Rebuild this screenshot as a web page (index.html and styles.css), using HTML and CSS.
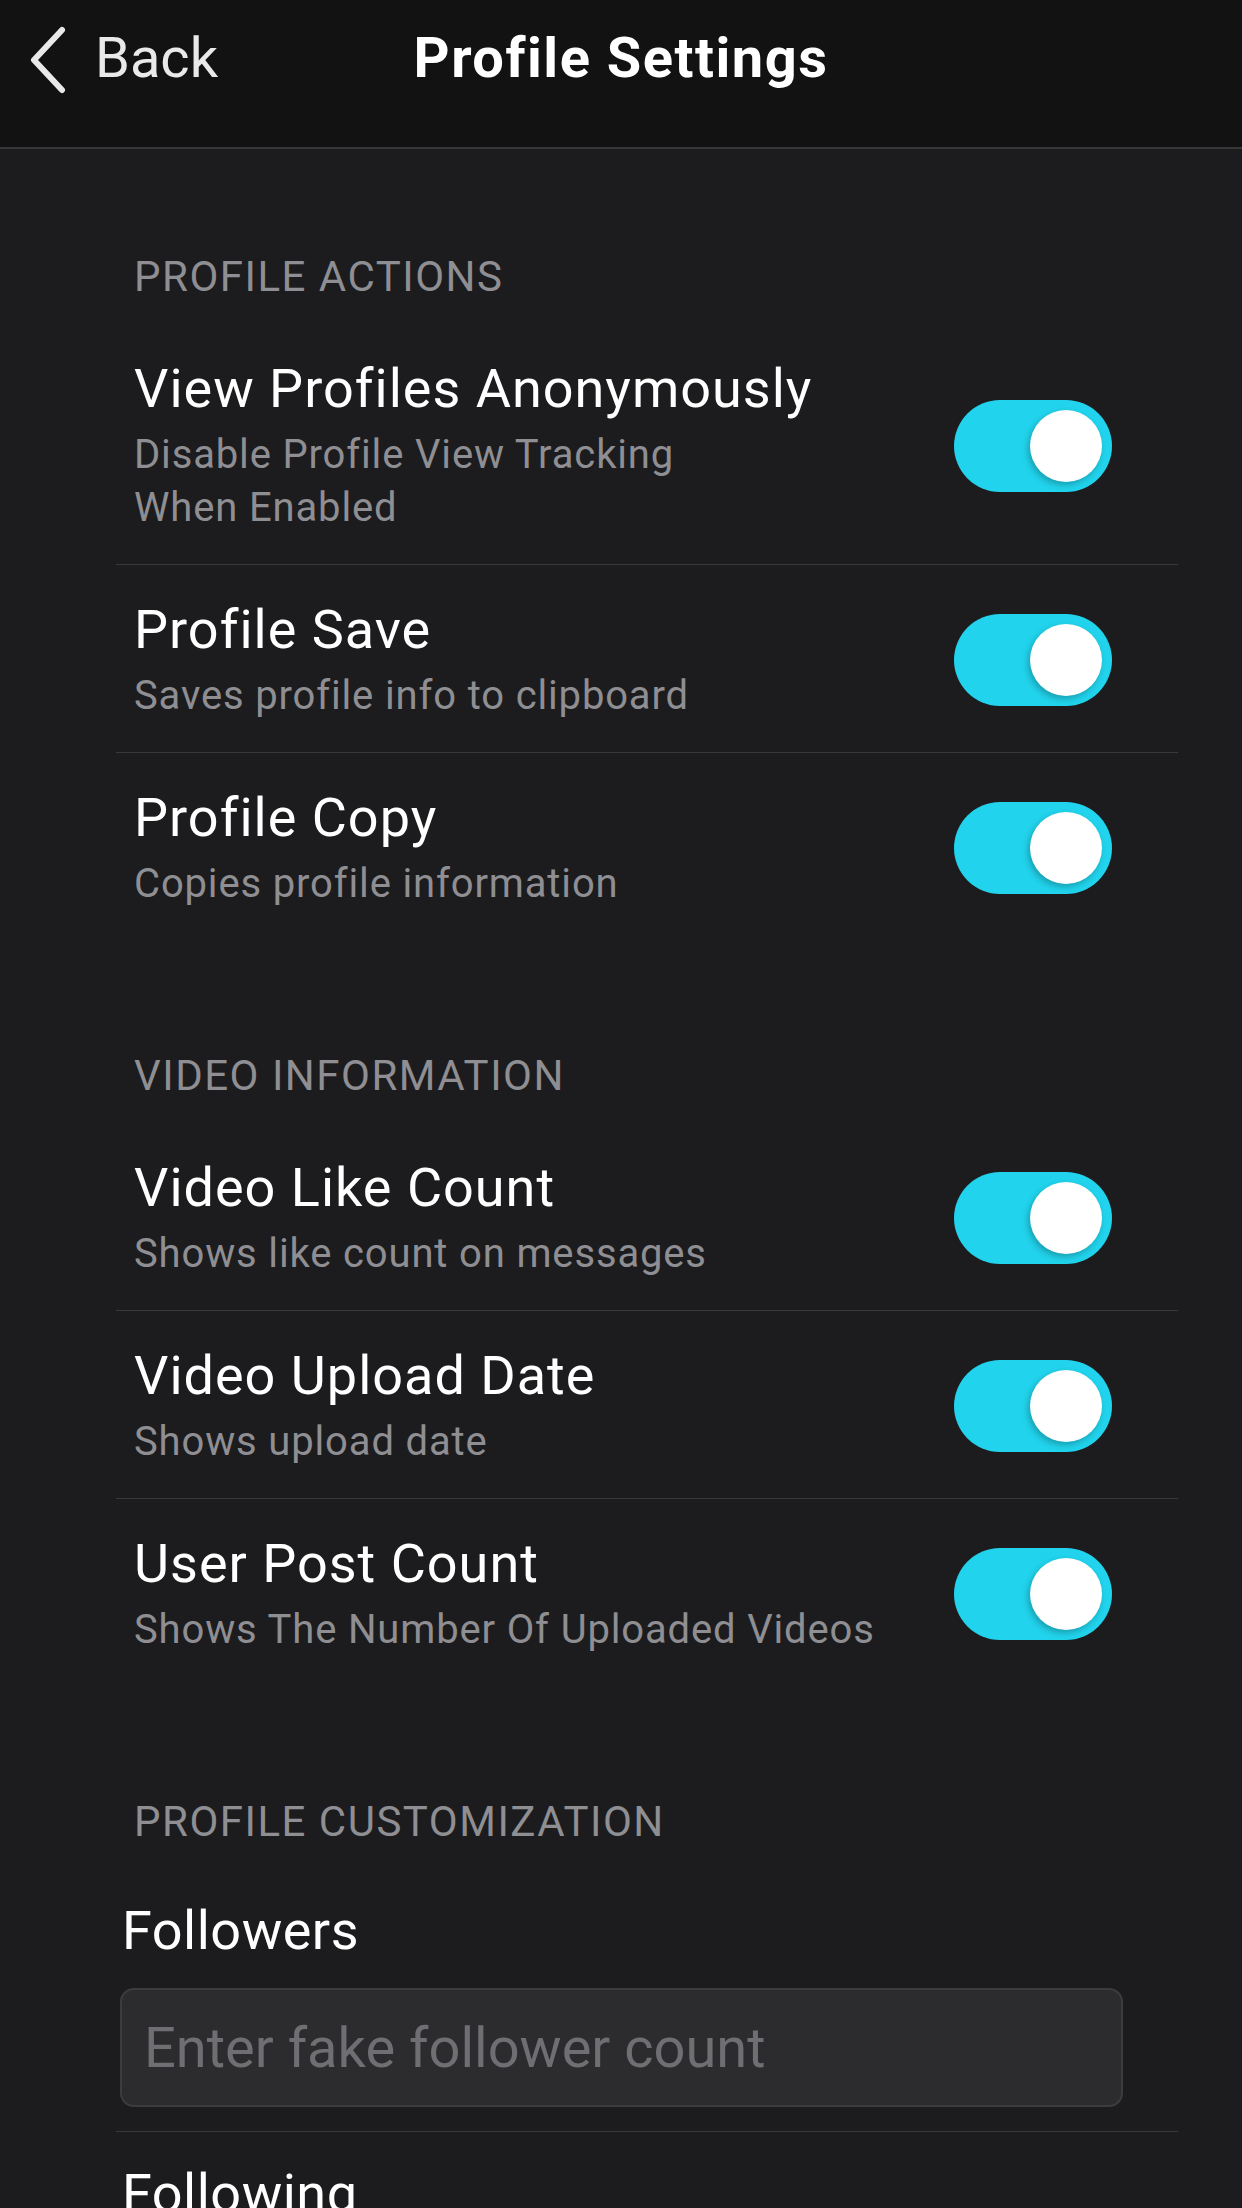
FILE: index.html
```html
<!DOCTYPE html>
<html lang="en">
<head>
<meta charset="utf-8">
<title>Profile Settings</title>
<link rel="stylesheet" href="styles.css">
</head>
<body>
<header class="navbar">
  <a class="back">
    <svg class="chevron" width="44" height="68" viewBox="0 0 44 68"><polyline points="36,4 8,34 36,64" fill="none" stroke="#e9e9ea" stroke-width="6" stroke-linecap="round" stroke-linejoin="round"/></svg>
    <span>Back</span>
  </a>
  <h1 class="nav-title">Profile Settings</h1>
  <div></div>
</header>
<main class="content">
  <section class="section">
    <h2 class="section-title">PROFILE ACTIONS</h2>
    <div class="row">
      <div class="row-text">
        <div class="row-title">View Profiles Anonymously</div>
        <div class="row-sub">Disable Profile View Tracking<br>When Enabled</div>
      </div>
      <span class="toggle"><span class="knob"></span></span>
    </div>
    <div class="row">
      <div class="row-text">
        <div class="row-title">Profile Save</div>
        <div class="row-sub">Saves profile info to clipboard</div>
      </div>
      <span class="toggle"><span class="knob"></span></span>
    </div>
    <div class="row">
      <div class="row-text">
        <div class="row-title">Profile Copy</div>
        <div class="row-sub">Copies profile information</div>
      </div>
      <span class="toggle"><span class="knob"></span></span>
    </div>
  </section>
  <section class="section">
    <h2 class="section-title">VIDEO INFORMATION</h2>
    <div class="row">
      <div class="row-text">
        <div class="row-title">Video Like Count</div>
        <div class="row-sub">Shows like count on messages</div>
      </div>
      <span class="toggle"><span class="knob"></span></span>
    </div>
    <div class="row">
      <div class="row-text">
        <div class="row-title">Video Upload Date</div>
        <div class="row-sub">Shows upload date</div>
      </div>
      <span class="toggle"><span class="knob"></span></span>
    </div>
    <div class="row">
      <div class="row-text">
        <div class="row-title">User Post Count</div>
        <div class="row-sub">Shows The Number Of Uploaded Videos</div>
      </div>
      <span class="toggle"><span class="knob"></span></span>
    </div>
  </section>
  <section class="section">
    <h2 class="section-title">PROFILE CUSTOMIZATION</h2>
    <div class="field">
      <label class="field-label">Followers</label>
      <input class="field-input" type="text" placeholder="Enter fake follower count">
    </div>
    <div class="field">
      <label class="field-label">Following</label>
      <input class="field-input" type="text" placeholder="Enter fake following count">
    </div>
  </section>
</main>
</body>
</html>
```

FILE: styles.css
```css
* { box-sizing: border-box; }
html, body { margin: 0; padding: 0; }
body {
  background: #1c1c1e;
  color: #ffffff;
  font-family: Roboto, "Liberation Sans", sans-serif;
  width: 1242px;
  height: 2208px;
  overflow: hidden;
}
.navbar {
  height: 149px;
  background: #121212;
  border-bottom: 2px solid #38383a;
  display: grid;
  grid-template-columns: 1fr auto 1fr;
  align-items: start;
  padding: 26px 26px 0 26px;
}
.back {
  display: flex;
  align-items: flex-start;
  color: #e9e9ea;
  font-size: 56px;
  line-height: 64px;
}
.chevron { margin-top: 0px; margin-right: 25px; }
.nav-title {
  margin: 0;
  font-size: 56px;
  line-height: 64px;
  font-weight: 700;
  letter-spacing: 1.5px;
  color: #ffffff;
}
.content {
  padding: 104px 64px 0 116px;
}
.section + .section { margin-top: 111px; }
.section-title {
  margin: 0 0 23px;
  padding-left: 18px;
  font-size: 42px;
  line-height: 48px;
  font-weight: 400;
  letter-spacing: 1.5px;
  color: #8e8e93;
}
.row {
  display: flex;
  align-items: center;
  justify-content: space-between;
  padding: 33px 66px 30px 18px;
  border-bottom: 1px solid #38383a;
}
.row:last-child { border-bottom: none; padding-bottom: 31px; }
.row-title {
  font-size: 54px;
  line-height: 64px;
  letter-spacing: 1px;
  color: #ffffff;
}
.row-sub {
  margin-top: 7px;
  font-size: 40px;
  line-height: 53px;
  color: #8e8e93;
  letter-spacing: 0.85px;
}
.toggle {
  position: relative;
  width: 158px;
  height: 92px;
  border-radius: 46px;
  background: #21d3ec;
  flex: none;
}
.knob {
  position: absolute;
  top: 10px;
  right: 10px;
  width: 72px;
  height: 72px;
  border-radius: 50%;
  background: #ffffff;
  box-shadow: -2px 3px 6px rgba(0, 0, 0, 0.25);
}
.field {
  padding: 30px 55px 24px 4px;
  border-bottom: 1px solid #38383a;
  display: flex;
  flex-direction: column;
  gap: 25px;
}
.field-label {
  padding-left: 2px;
  font-size: 54px;
  line-height: 64px;
  letter-spacing: 0.5px;
  color: #ffffff;
}
.field-input {
  width: 1003px;
  height: 119px;
  border: 2px solid #3c3c3f;
  border-radius: 14px;
  background: #2c2c2e;
  padding: 0 0 0 22px;
  font-family: Roboto, "Liberation Sans", sans-serif;
  font-size: 56px;
  color: #ffffff;
  outline: none;
}
.field-input::placeholder { color: #6e6e73; }
```
